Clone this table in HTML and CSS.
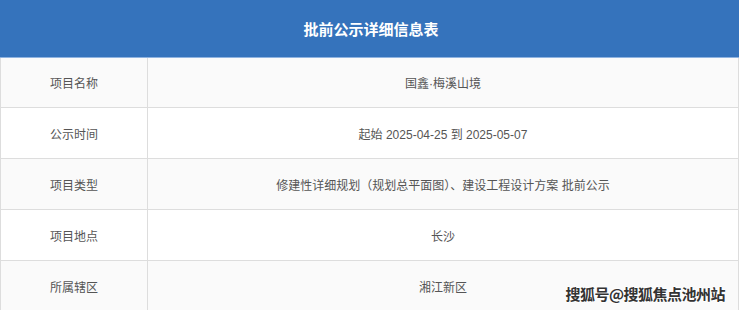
FILE: index.html
```html
<!DOCTYPE html>
<html lang="zh">
<head>
<meta charset="utf-8">
<link rel="stylesheet" href="styles.css">
</head>
<body>
<div class="page">
  <div class="title">批前公示详细信息表</div>
  <div class="table">
    <div class="row odd"><div class="label">项目名称</div><div class="value">国鑫·梅溪山境</div></div>
    <div class="row"><div class="label">公示时间</div><div class="value">起始 2025-04-25 到 2025-05-07</div></div>
    <div class="row odd"><div class="label">项目类型</div><div class="value">修建性详细规划（规划总平面图）、建设工程设计方案 批前公示</div></div>
    <div class="row"><div class="label">项目地点</div><div class="value">长沙</div></div>
    <div class="row odd"><div class="label">所属辖区</div><div class="value">湘江新区</div></div>
  </div>
  <div class="watermark">搜狐号@搜狐焦点池州站</div>
</div>
</body>
</html>
```
FILE: styles.css
```css
html, body {
  margin: 0;
  padding: 0;
  background: #ffffff;
}
body {
  font-family: "Liberation Sans", "Noto Sans CJK SC", sans-serif;
  width: 740px;
  height: 310px;
  overflow: hidden;
}
.page {
  position: relative;
  width: 739px;
  height: 310px;
}
.title {
  height: 57px;
  background: #3573bc;
  border-bottom: 1px solid #8fb3e0;
  color: #ffffff;
  font-size: 15px;
  font-weight: bold;
  display: flex;
  align-items: center;
  justify-content: center;
  padding-left: 3px;
}
.table {
  border-right: 1px solid #dddddd;
  border-left: 1px solid #dddddd;
}
.row {
  display: grid;
  grid-template-columns: 147px 1fr;
  height: 50px;
  border-bottom: 1px solid #dddddd;
  background: #ffffff;
}
.row.odd {
  background: #fafafa;
}
.row:first-child {
  height: 49px;
}
.label, .value {
  display: flex;
  align-items: center;
  justify-content: center;
  font-size: 12px;
  color: #555555;
}
.label {
  border-right: 1px solid #dddddd;
}
.watermark {
  position: absolute;
  right: 14px;
  bottom: 6px;
  font-family: "Noto Sans CJK SC", sans-serif;
  font-size: 15px;
  font-weight: bold;
  color: #333333;
  letter-spacing: -0.5px;
  text-shadow: 1px 0 #fff, -1px 0 #fff, 0 1px #fff, 0 -1px #fff;
}
```
